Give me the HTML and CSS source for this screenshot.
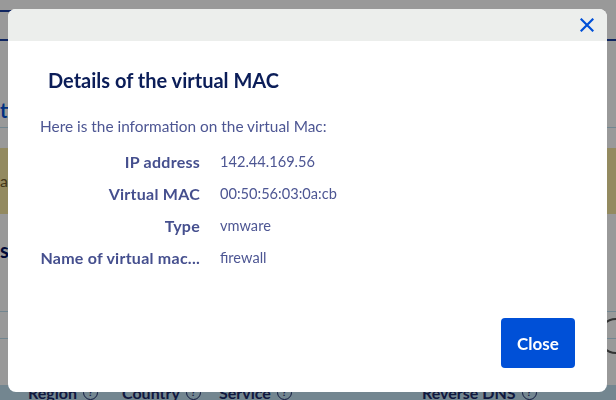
FILE: index.html
```html
<!DOCTYPE html>
<html lang="en">
<head>
<meta charset="utf-8">
<title>Details of the virtual MAC</title>
<link rel="stylesheet" href="styles.css">
</head>
<body>
<div class="page">
  <div class="tabs"><span class="tab">Tab</span></div>
  <div class="section-title">tions</div>
  <div class="rule"></div>
  <div class="banner">available</div>
  <div class="subhead">ss</div>
  <div class="rule rule-a"></div>
  <div class="rule rule-b"></div>
  <div class="table-head">
    <span class="col c1">Region <i class="q">?</i></span>
    <span class="col c2">Country <i class="q">?</i></span>
    <span class="col c3">Service <i class="q">?</i></span>
    <span class="col c4">Reverse DNS <i class="q">?</i></span>
  </div>
  <div class="circle"></div>
</div>
<div class="overlay"></div>
<div class="dialog" role="dialog">
  <div class="dialog-header">
    <button class="close-x" aria-label="Close">
      <svg width="14" height="14" viewBox="0 0 14 14"><path d="M1.5 1.5 L12.5 12.5 M12.5 1.5 L1.5 12.5" stroke="#0050d7" stroke-width="2.2" fill="none" stroke-linecap="square"/></svg>
    </button>
  </div>
  <div class="dialog-body">
    <h2 class="title">Details of the virtual MAC</h2>
    <p class="intro">Here is the information on the virtual Mac:</p>
    <dl class="details">
      <dt>IP address</dt><dd>142.44.169.56</dd>
      <dt>Virtual MAC</dt><dd>00:50:56:03:0a:cb</dd>
      <dt>Type</dt><dd>vmware</dd>
      <dt>Name of virtual mac...</dt><dd>firewall</dd>
    </dl>
  </div>
  <div class="dialog-footer">
    <button class="btn-close">Close</button>
  </div>
</div>
</body>
</html>
```
FILE: styles.css
```css
html, body {
  margin: 0;
  padding: 0;
  width: 616px;
  height: 400px;
  overflow: hidden;
  font-family: Lato, "Open Sans", sans-serif;
  background: #ffffff;
}
.page {
  position: relative;
  width: 616px;
  height: 400px;
  background: #ffffff;
}
.tabs {
  height: 41px;
  box-sizing: border-box;
  padding-top: 10px;
  border-bottom: 2px solid #1a3fa0;
}
.tab {
  display: block;
  width: 40px;
  border-top: 2px solid #1a3fa0;
  color: transparent;
}
.section-title {
  margin-top: 57px;
  font-weight: 700;
  font-size: 20px;
  color: #0050d7;
  line-height: 24px;
}
.rule {
  height: 1px;
  background: #bfe0f0;
  margin-top: 5px;
}
.banner {
  margin-top: 20px;
  height: 66px;
  background: #f6e7a0;
  color: #6d5a2c;
  font-size: 16px;
  line-height: 66px;
}
.subhead {
  margin-top: 24px;
  font-weight: 700;
  font-size: 20px;
  color: #000e5c;
  line-height: 24px;
}
.rule-a { margin-top: 49px; }
.rule-b { margin-top: 26px; }
.table-head {
  position: absolute;
  left: 0;
  right: 0;
  top: 385px;
  height: 15px;
  background: #c0dff0;
  display: flex;
  font-weight: 700;
  font-size: 16px;
  color: #1c2a6a;
  line-height: 30px;
  padding-left: 28px;
}
.col { display: inline-flex; gap: 6px; align-items: center; flex: none; }
.c1 { width: 94px; }
.c2 { width: 97px; }
.c3 { width: 203px; }
.q {
  font-style: normal;
  font-size: 10px;
  width: 13px;
  height: 13px;
  line-height: 13px;
  text-align: center;
  border: 1px solid #1c2a6a;
  border-radius: 50%;
}
.circle {
  position: absolute;
  left: 598px;
  top: 318px;
  width: 36px;
  height: 36px;
  border: 2px solid #555;
  border-radius: 50%;
  box-sizing: border-box;
}
.overlay {
  position: fixed;
  inset: 0;
  background: rgba(0, 0, 0, 0.4);
}
.dialog {
  position: fixed;
  left: 8px;
  top: 9px;
  width: 599px;
  height: 383px;
  background: #ffffff;
  border-radius: 8px;
  overflow: hidden;
  display: flex;
  flex-direction: column;
}
.dialog-header {
  height: 32px;
  background: #eceeec;
  display: flex;
  justify-content: flex-end;
  align-items: center;
  padding-right: 12px;
  flex: none;
}
.close-x {
  border: 0;
  background: none;
  padding: 0;
  width: 16px;
  height: 16px;
  display: flex;
  align-items: center;
  justify-content: center;
  cursor: pointer;
}
.dialog-body {
  padding: 0 32px;
  flex: 1;
}
.title {
  margin: 25px 0 0 8px;
  font-size: 20px;
  line-height: 28px;
  font-weight: 700;
  color: #0b1d58;
}
.intro {
  margin: 22px 0 0 0;
  font-size: 15.4px;
  line-height: 20px;
  color: #4d5693;
}
.details {
  margin: 16px 0 0 0;
  display: grid;
  grid-template-columns: 160px auto;
  column-gap: 20px;
  row-gap: 12px;
  font-size: 14.6px;
  line-height: 20px;
  color: #4d5693;
}
.details dt {
  font-weight: 700;
  font-size: 16px;
  letter-spacing: 0.25px;
  text-align: right;
  color: #454f8e;
}
.details dd {
  margin: 0;
}
.dialog-footer {
  display: flex;
  justify-content: flex-end;
  padding: 0 32px 24px 0;
}
.btn-close {
  width: 74px;
  height: 50px;
  border: 0;
  border-radius: 4px;
  background: #0050d7;
  color: #ffffff;
  font-family: inherit;
  font-weight: 700;
  font-size: 17px;
  cursor: pointer;
}
```
